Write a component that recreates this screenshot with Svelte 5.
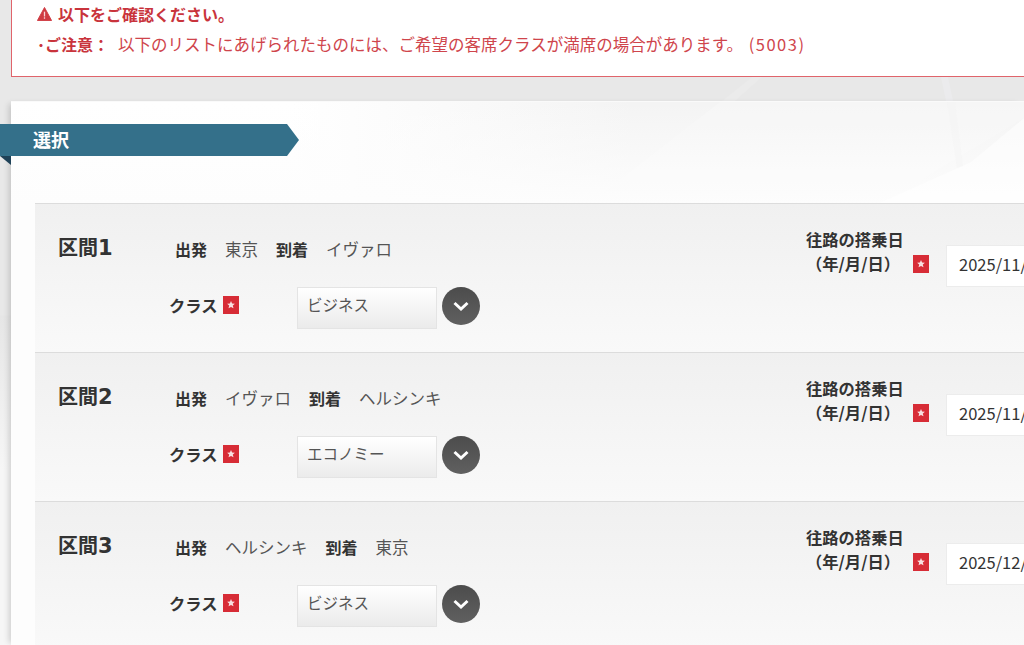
<script lang="ts">
    interface Leg {
        name: string;
        no: number;
        from: string;
        to: string;
        cabin: string;
        date: string;
    }

    const legs: Leg[] = [
        { name: '区間', no: 1, from: '東京', to: 'イヴァロ', cabin: 'ビジネス', date: '2025/11/20' },
        { name: '区間', no: 2, from: 'イヴァロ', to: 'ヘルシンキ', cabin: 'エコノミー', date: '2025/11/27' },
        { name: '区間', no: 3, from: 'ヘルシンキ', to: '東京', cabin: 'ビジネス', date: '2025/12/01' }
    ];
</script>

{#snippet required()}
    <span class="required">
        <svg viewBox="0 0 16 18" width="16" height="18">
            <rect width="16" height="18" fill="#d72c36" />
            <path d="M8 5l1.1 2.6 2.8.2-2.1 1.8.7 2.7L8 10.9l-2.5 1.4.7-2.7-2.1-1.8 2.8-.2z" fill="#f8dfe0" />
        </svg>
    </span>
{/snippet}

<div class="page">
    <svg class="backdrop" viewBox="0 0 1024 645" width="1024" height="645" aria-hidden="true">
        <path d="M722 101L752 77H762L735 101z" fill="#ebebeb" />
        <path d="M941 77H948L953 101H946z" fill="#ebebed" />
    </svg>

    <section class="notice">
        <p class="notice-title">
            <svg viewBox="0 0 16 15" width="15" height="14" aria-hidden="true">
                <path d="M8 .5L15.6 14.5H.4z" fill="#cf3a42" stroke="#cf3a42" stroke-linejoin="round" />
                <rect x="7.3" y="5" width="1.4" height="5.2" fill="#f7d3d4" />
                <rect x="7.3" y="11" width="1.4" height="1.6" fill="#f7d3d4" />
            </svg>
            以下をご確認ください。
        </p>
        <p class="notice-line"><b>･ご注意：</b><span>以下のリストにあげられたものには、ご希望の客席クラスが満席の場合があります。 <span class="code">(5003)</span></span></p>
    </section>

    <main class="panel">
        <svg class="panel-art" viewBox="0 0 1013 102" width="1013" height="102" aria-hidden="true">
            <path d="M709 0L606 80L590 102H870L1013 16V0z" fill="#fff" fill-opacity="0.2" />
            <path d="M866 102L960 60L1013 16V102z" fill="#fff" fill-opacity="0.5" />
            <path d="M936 0H944L952 64L946 66z" fill="#f1f1f1" fill-opacity="0.3" />
        </svg>

        <h2 class="ribbon">選択</h2>
        <span class="fold"></span>

        <div class="legs">
            {#each legs as leg}
                <article class="leg">
                    <h3>{leg.name}<span>{leg.no}</span></h3>
                    <div class="route">
                        <div class="stops">
                            <b>出発</b><span>{leg.from}</span>
                            <b>到着</b><span>{leg.to}</span>
                        </div>
                        <div class="cabin">
                            <div class="cabin-label">クラス{@render required()}</div>
                            <div class="select">{leg.cabin}</div>
                            <span class="chevron">
                                <svg viewBox="0 0 38 38" width="38" height="38">
                                    <path d="M12.5 16l6.5 6 6.5-6" fill="none" stroke="#fff" stroke-width="3" />
                                </svg>
                            </span>
                        </div>
                    </div>
                    <div class="departure">
                        <div class="date-label">往路の搭乗日<br />（年/月/日）{@render required()}</div>
                        <div class="date">{leg.date}</div>
                    </div>
                </article>
            {/each}
        </div>
    </main>
</div>

<style>
    :global(body) {
        margin: 0;
        background: #e9e9e9;
        overflow: hidden;
    }

    .page {
        position: relative;
        width: 1024px;
        height: 645px;
        overflow: hidden;
        font-family: "Noto Sans CJK JP", "Noto Sans", sans-serif;
        color: #333;
        background: linear-gradient(#e8e8e8 315px, #e6e6e6 316px, #f6f6f6 470px);
    }

    .backdrop {
        position: absolute;
        inset: 0;
    }

    p, h2, h3 {
        margin: 0;
    }

    .notice {
        position: relative;
        box-sizing: border-box;
        height: 77px;
        width: 1040px;
        margin-left: 11px;
        padding: 4px 0 0 25px;
        background: #fff;
        border: 1px solid #e0646b;
        border-top: 0;
        color: #c9343c;
    }

    .notice-title {
        display: flex;
        align-items: center;
        gap: 6px;
        font-size: 16px;
        line-height: 20px;
        font-weight: 700;
    }

    .notice-line {
        display: flex;
        margin-top: 10px;
        font-size: 16.5px;
        line-height: 20px;
        color: #cf454c;
    }

    .notice-line b {
        width: 81px;
        flex: none;
        font-size: 16px;
        color: #c9343c;
    }

    .code {
        margin-left: 2px;
        letter-spacing: 1.5px;
    }

    .panel {
        position: relative;
        box-sizing: border-box;
        width: 1013px;
        height: 545px;
        margin: 24px 0 0 11px;
        padding-top: 22px;
        border-top: 1px solid #fafafa;
        background:
            linear-gradient(rgba(255, 255, 255, 0), #fdfdfd 102px),
            linear-gradient(to right, #fff 280px, #f4f4f4 620px);
        box-shadow: -5px 0 6px -3px rgba(0, 0, 0, 0.16);
    }

    .panel-art {
        position: absolute;
        left: 0;
        top: 0;
    }

    .ribbon {
        position: relative;
        box-sizing: border-box;
        width: 299px;
        height: 32px;
        margin-left: -11px;
        padding-left: 33px;
        background: #34708a;
        clip-path: polygon(0 0, 287px 0, 100% 50%, 287px 100%, 0 100%);
        color: #fff;
        font-size: 18px;
        line-height: 30px;
        font-weight: 700;
    }

    .fold {
        position: absolute;
        left: -11px;
        top: 54px;
        border-top: 9px solid #1f4258;
        border-left: 11px solid transparent;
    }

    .legs {
        position: relative;
        margin: 47px 0 0 24px;
    }

    .leg {
        box-sizing: border-box;
        height: 149px;
        display: flex;
        border-top: 1px solid #dcdcdc;
        background: linear-gradient(#f0f0f0, #f9f9f9);
    }

    h3 {
        width: 116px;
        flex: none;
        padding: 30px 0 0 23px;
        box-sizing: border-box;
        font-size: 20px;
        line-height: 26px;
        font-weight: 700;
    }

    h3 span {
        font-family: "DejaVu Sans", sans-serif;
        font-size: 21px;
    }

    .route {
        width: 655px;
        flex: none;
        padding-left: 18px;
        box-sizing: border-box;
    }

    .stops {
        display: flex;
        padding: 34px 0 0 6px;
        font-size: 16.5px;
        line-height: 22px;
        color: #555;
    }

    .stops b {
        color: #333;
        font-size: 16px;
        margin-right: 18px;
    }

    .stops span {
        margin-right: 18px;
    }

    .cabin {
        display: flex;
        align-items: flex-start;
        margin-top: 27px;
    }

    .cabin-label {
        width: 128px;
        flex: none;
        display: flex;
        align-items: center;
        gap: 5px;
        height: 36px;
        font-size: 16.3px;
        font-weight: 700;
    }

    .required {
        display: inline-flex;
    }

    .select {
        box-sizing: border-box;
        width: 140px;
        height: 42px;
        padding: 0 9px;
        line-height: 32px;
        font-size: 15.5px;
        color: #555;
        border: 1px solid #e4e4e4;
        background: linear-gradient(#fff, #ebebeb);
    }

    .chevron {
        display: flex;
        width: 38px;
        height: 38px;
        margin-left: 5px;
        border-radius: 50%;
        background: linear-gradient(#4c4c4c, #606060);
    }

    .departure {
        display: flex;
        align-items: flex-start;
        padding-top: 23px;
    }

    .date-label {
        position: relative;
        width: 140px;
        flex: none;
        font-size: 16.3px;
        line-height: 24px;
        font-weight: 700;
    }

    .date-label .required {
        position: absolute;
        left: 107px;
        top: 28px;
    }

    .date {
        box-sizing: border-box;
        width: 160px;
        height: 42px;
        margin-top: 18px;
        padding: 0 12px;
        line-height: 36px;
        font-size: 16.5px;
        background: #fff;
        border: 1px solid #ececec;
    }
</style>
